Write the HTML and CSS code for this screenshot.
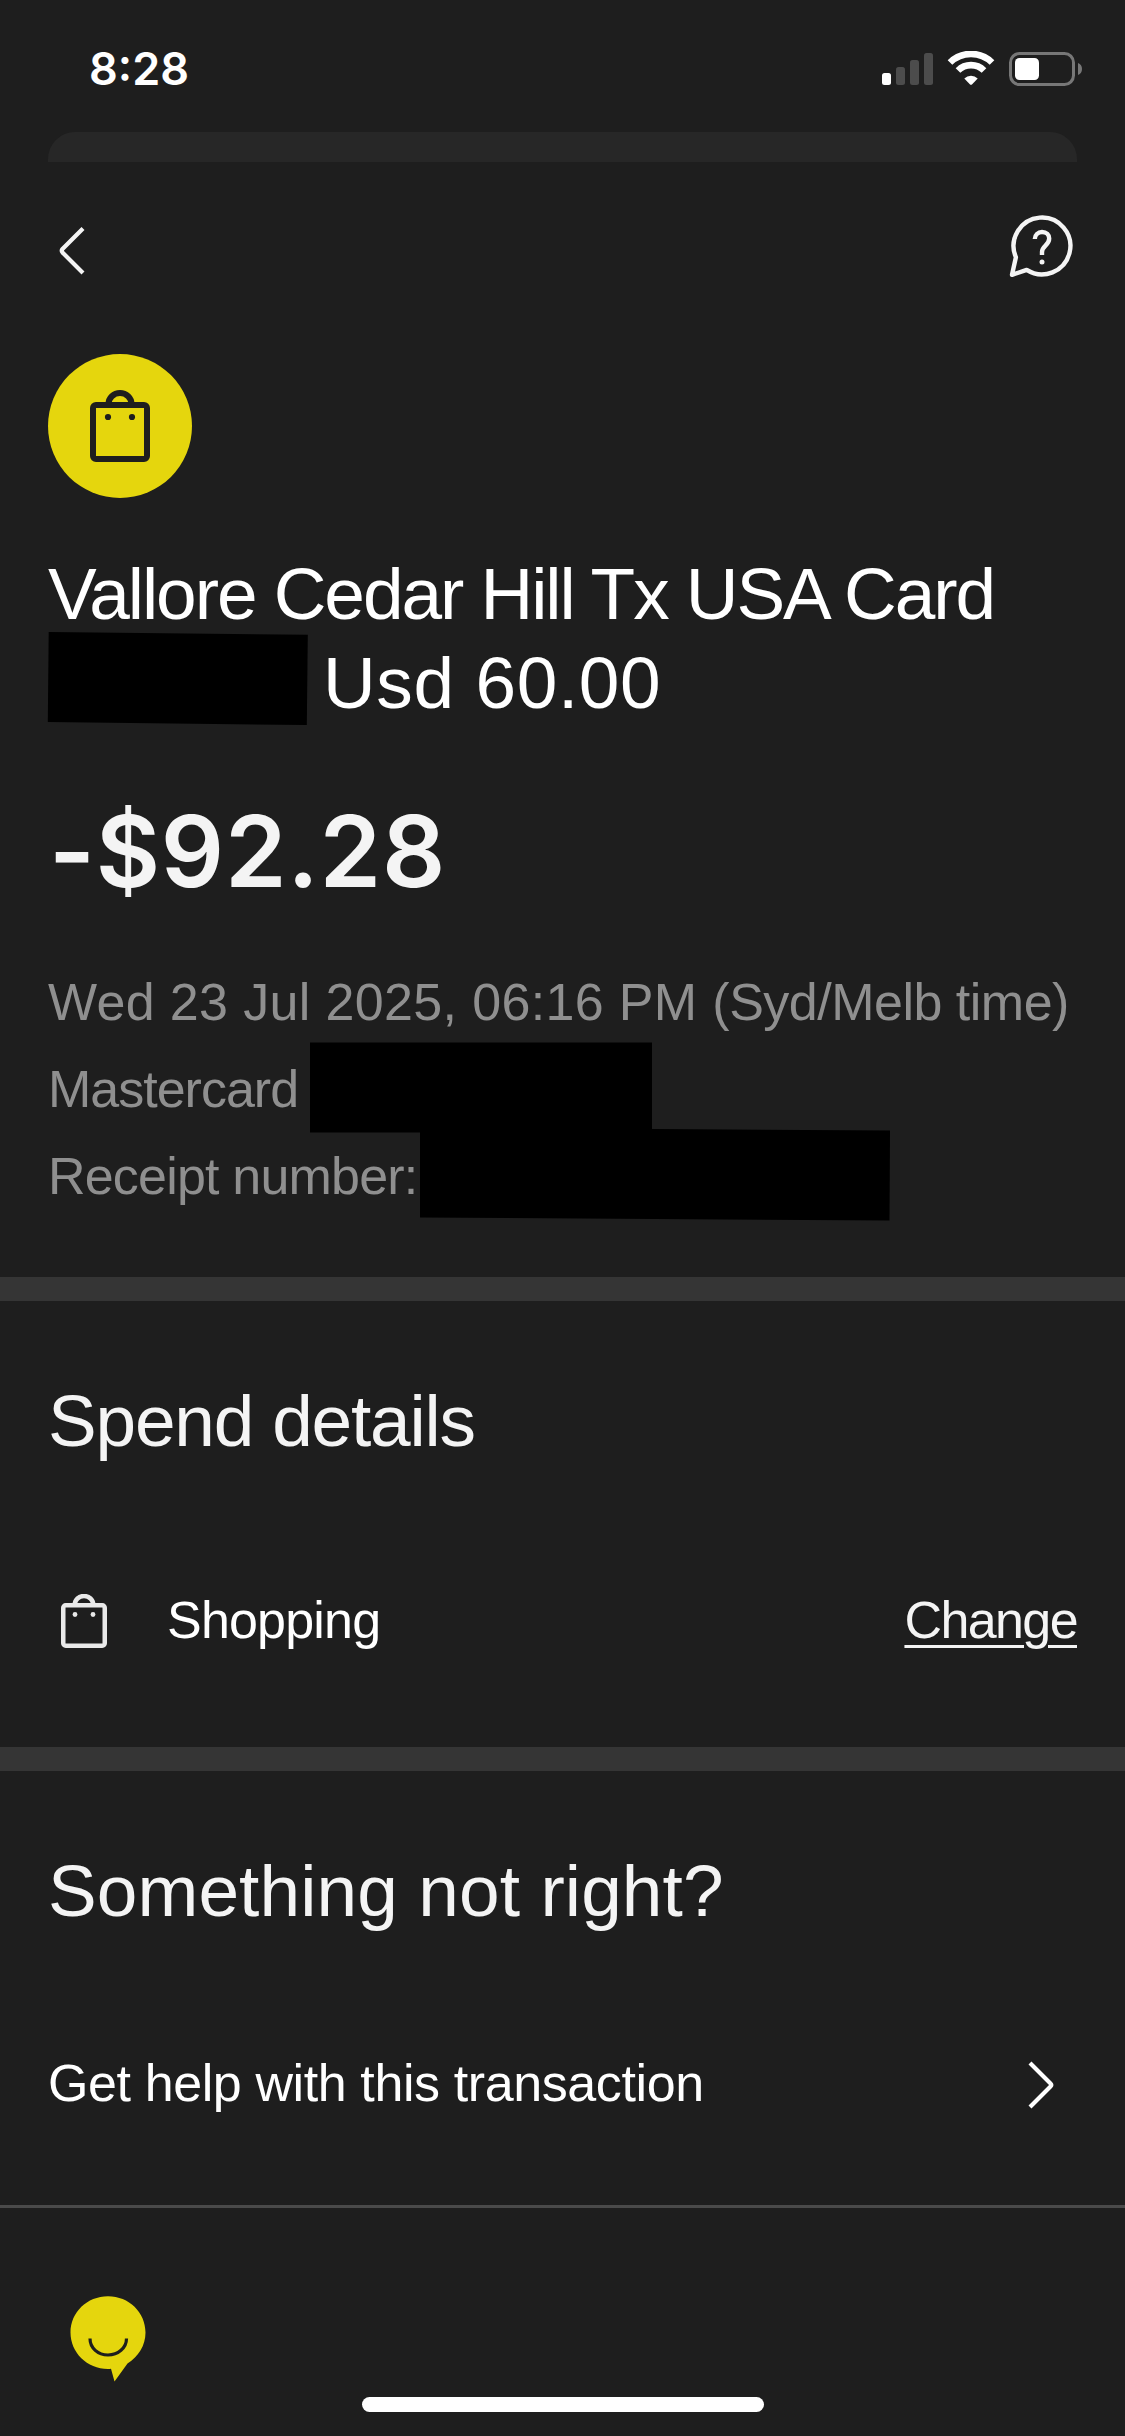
FILE: index.html
```
<!DOCTYPE html>
<html lang="en">
<head>
<meta charset="utf-8">
<title>Transaction details</title>
<link rel="stylesheet" href="styles.css">
</head>
<body>
<div class="screen">
  <header class="status-bar">
    <span class="clock">8:28</span>
    <svg class="status-icons" width="202" height="36" viewBox="0 0 202 36">
      <rect x="0" y="22" width="9" height="12" rx="2.5" fill="#fff"/>
      <g fill="#4c4c4c">
        <rect x="14" y="16" width="9" height="18" rx="2.5"/>
        <rect x="28" y="9" width="9" height="25" rx="2.5"/>
        <rect x="42" y="2" width="9" height="32" rx="2.5"/>
      </g>
      <g fill="none" stroke="#fff">
        <path d="M68 11.5A30 30 0 0 1 110 11.5" stroke-width="6.6"/>
        <path d="M76 19.5A18.5 18.5 0 0 1 102 19.5" stroke-width="6.6"/>
      </g>
      <path d="M82.300 27.400A9.500 9.500 0 0 1 95.700 27.400L90.200 33.200Q89 34.400 87.800 33.200Z" fill="#fff"/>
      <rect x="128.500" y="2.500" width="63" height="31" rx="9" fill="none" stroke="#777" stroke-width="3"/>
      <rect x="133" y="7" width="24" height="22" rx="4.500" fill="#fff"/>
      <path d="M196 12Q200 13.500 200 18Q200 22.500 196 24Z" fill="#777"/>
    </svg>
  </header>
  <div class="sheet-edge"></div>

  <nav class="toolbar">
    <svg class="back" width="40" height="56" viewBox="0 0 40 56">
      <path d="M35 5.500L14.500 26Q13 27.700 14.500 29.500L35 50" fill="none" stroke="#f4f4f4" stroke-width="4.200"/>
    </svg>
    <svg class="help" width="66" height="66" viewBox="0 0 66 66">
      <g fill="none" stroke="#f4f4f4" stroke-width="4.400" stroke-linejoin="round">
        <path d="M6.900 44.200A28.400 28.400 0 1 1 17.700 56.900L3 61.800Z"/>
        <path d="M25.800 26C25.800 22 29 19 33 19C37.500 19 40.200 22 40.200 25.500C40.200 32.500 33 32.500 33 39V42"/>
      </g>
      <circle cx="33" cy="49" r="2.500" fill="#f4f4f4"/>
    </svg>
  </nav>

  <main>
    <section class="hero">
      <div class="category-badge">
        <svg width="60" height="72" viewBox="0 0 60 72" fill="none" stroke="#1e1e1e" stroke-width="6">
          <rect x="3" y="15" width="54" height="54" rx="3"/>
          <path d="M18.500 14A11.500 11 0 0 1 41.500 14"/>
          <g fill="#1e1e1e" stroke="none"><circle cx="18" cy="27" r="3.100"/><circle cx="42" cy="27" r="3.100"/></g>
        </svg>
      </div>
      <h1 class="merchant">
        <span class="merchant-line">Vallore Cedar Hill Tx USA Card</span>
        <span class="merchant-line second">
          <svg class="redacted" width="275" height="89" viewBox="0 0 275 89"><polygon points="0.700,-6 259.800,-3.300 258.800,87 -0.200,84"/></svg>
          <span>Usd 60.00</span>
        </span>
      </h1>
      <p class="amount">-$92.28</p>
      <div class="meta">
        <p class="date"><span class="day">Wed 23 Jul 2025, 06:16 PM&nbsp;</span><span class="zone">(Syd/Melb time)</span></p>
        <p class="card"><span>Mastercard</span><svg class="redacted" width="342" height="87" viewBox="0 0 342 87"><rect x="0" y="-3.500" width="342" height="90"/></svg></p>
        <p class="receipt"><span>Receipt number:</span><svg class="redacted" width="470" height="87" viewBox="0 0 470 87"><polygon points="0,-5.500 470,-2.500 469.500,87.500 0,84.500"/></svg></p>
      </div>
    </section>

    <section class="panel spend">
      <h2>Spend details</h2>
      <div class="row">
        <svg class="bag" width="46" height="54" viewBox="0 0 46 54" fill="none" stroke="#e9e9e9" stroke-width="4.500">
          <rect x="2.250" y="11.250" width="41.500" height="40.500" rx="2.500"/>
          <path d="M13.800 10.500A9.200 8.500 0 0 1 32.200 10.500"/>
          <g fill="#e9e9e9" stroke="none"><circle cx="14" cy="20.500" r="2.400"/><circle cx="32" cy="20.500" r="2.400"/></g>
        </svg>
        <span class="shopping">Shopping</span>
        <a class="change">Change</a>
      </div>
    </section>

    <section class="panel support">
      <h2>Something not right?</h2>
      <div class="row">
        <span class="get-help">Get help with this transaction</span>
        <svg class="next" width="32" height="56" viewBox="0 0 32 56">
          <path d="M4 6L24.500 26.500Q26 28 24.500 29.500L4 50" fill="none" stroke="#fff" stroke-width="4.200"/>
        </svg>
      </div>
    </section>
  </main>

  <footer>
    <svg class="chat" width="76" height="86" viewBox="0 0 76 86">
      <path d="M41 72.800Q39.500 73 38 73C17 73 .5 56.500 .5 36.500S17 .3 38 .3S75.500 16.500 75.500 36.500C75.500 49.500 68.500 60.500 57.500 67.500L44.500 85.500Z" fill="#e5d60d"/>
      <path d="M20 42.500C20 52 28 59 38 59S56.500 52 56.500 42.500" fill="none" stroke="#1e1e1e" stroke-width="3.200"/>
    </svg>
    <div class="home-indicator"></div>
  </footer>
</div>
</body>
</html>
```
FILE: styles.css
```
* { box-sizing: border-box; }

body {
  margin: 0;
  background: #1e1e1e;
  color: #f4f4f4;
  font-family: "Liberation Sans", Arial, sans-serif;
}

h1, h2, p { margin: 0; font-weight: 400; }
svg { display: block; flex: none; }

.screen {
  display: flex;
  flex-direction: column;
  width: 1125px;
  height: 2436px;
  overflow: hidden;
}

.status-bar {
  display: flex;
  justify-content: space-between;
  height: 132px;
  padding: 51px 43px 0 89px;
}
.clock {
  margin-top: -8px;
  font: 600 45px/52px Inter, sans-serif;
  color: #fff;
}
.status-icons { margin-right: -2px; }

.sheet-edge {
  height: 30px;
  margin: 0 48px;
  border-radius: 27px 27px 0 0;
  background: #272727;
}

.toolbar {
  display: flex;
  justify-content: space-between;
  height: 192px;
  padding: 51px 50px 0 48px;
}
.back { margin-top: 10px; }

.hero { height: 923px; padding-left: 48px; white-space: nowrap; }

.category-badge {
  display: flex;
  justify-content: center;
  width: 144px;
  height: 144px;
  padding-top: 36px;
  border-radius: 50%;
  background: #e5d60d;
}

.merchant { margin-top: 51px; font-size: 73px; line-height: 89px; color: #fff; }
.merchant-line { display: block; letter-spacing: -2.05px; }
.merchant-line.second { display: flex; letter-spacing: .6px; }
.redacted { overflow: visible; }

.amount {
  margin: 64px 0 48px 1px;
  font: 560 99px/120px Inter, sans-serif;
  letter-spacing: .7px;
}

.meta { font-size: 52px; line-height: 87px; color: #8f8f8f; }
.meta p { display: flex; }
.day { letter-spacing: .35px; }
.zone { letter-spacing: -.5px; }
.card span { width: 262px; letter-spacing: -1px; }
.receipt span { width: 372px; letter-spacing: -.8px; }

.panel { padding: 75px 48px 0; border-top: 24px solid #353535; }
.panel h2 { font-size: 73px; line-height: 90px; }
.spend { height: 470px; }
.spend h2 { letter-spacing: -1.2px; }
.support { height: 458px; padding-top: 75px; }
.support h2 { letter-spacing: .1px; }

.row { display: flex; align-items: center; height: 60px; font-size: 52px; line-height: 60px; }
.spend .row { margin-top: 124px; padding-left: 13px; }
.support .row { margin-top: 117px; }
.bag { margin: 2px 60px 0 0; }
.shopping { letter-spacing: -.8px; color: #fff; }
.change {
  margin-left: auto;
  letter-spacing: -1.6px;
  text-decoration: underline;
  text-decoration-thickness: 3px;
  text-underline-offset: 7px;
}
.get-help { letter-spacing: -.4px; color: #fff; }
.next { margin: 4px 19px 0 auto; }

footer {
  flex: 1;
  display: flex;
  flex-direction: column;
  padding: 88px 0 24px 70px;
  border-top: 3px solid #4a4a4a;
}
.home-indicator {
  width: 402px;
  height: 15px;
  margin: auto 0 0 292px;
  border-radius: 8px;
  background: #fff;
}
```
